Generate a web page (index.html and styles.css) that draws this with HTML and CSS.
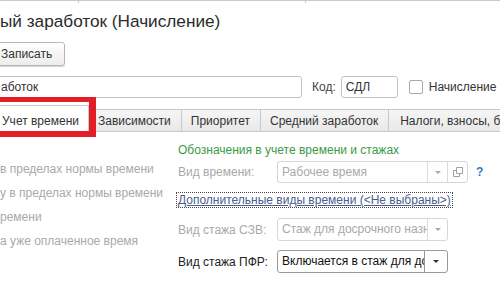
FILE: index.html
```html
<!DOCTYPE html>
<html lang="ru">
<head>
  <meta charset="UTF-8">
  <title>Средний заработок (Начисление)</title>
  <link rel="stylesheet" href="styles.css">
</head>
<body>
  <div class="topbar"><span class="seg seg1"></span><span class="seg seg2"></span><span class="seg"></span></div>

  <h1 class="title">ый заработок (Начисление)</h1>

  <div class="toolbar">
    <button class="btn">Записать</button>
  </div>

  <div class="fields">
    <div class="field name">аботок</div>
    <span class="lbl">Код:</span>
    <div class="field code">СДЛ</div>
    <label class="check"><span class="box"></span>Начисление</label>
  </div>

  <div class="tabs">
    <div class="tab active">Учет времени</div>
    <div class="tab">Зависимости</div>
    <div class="tab">Приоритет</div>
    <div class="tab">Средний заработок</div>
    <div class="tab last">Налоги, взносы, бухучет</div>
    <div class="mark"></div>
  </div>

  <div class="page">
    <div class="left">
      <div class="opt">в пределах нормы времени</div>
      <div class="opt">у в пределах нормы времени</div>
      <div class="opt">ремени</div>
      <div class="opt">а уже оплаченное время</div>
    </div>

    <div class="right">
      <div class="group">Обозначения в учете времени и стажах</div>

      <div class="row row-time">
        <span class="cap off">Вид времени:</span>
        <div class="combo off wide">
          <span class="combo-text">Рабочее время</span>
          <span class="combo-btn"><i class="arrow"></i></span>
          <span class="combo-btn">
            <svg width="10" height="10" viewBox="0 0 10 10"><path d="M3.5 0.5h6v6h-6z M0.5 3.5h3 M0.5 3.5v6h6v-3" fill="none" stroke="#a0a0a0"/></svg>
          </span>
        </div>
        <span class="help">?</span>
      </div>

      <div class="row row-link">
        <a class="link" href="#">Дополнительные виды времени (&lt;Не выбраны&gt;)</a>
      </div>

      <div class="row row-szv">
        <span class="cap off">Вид стажа СЗВ:</span>
        <div class="combo off">
          <span class="combo-text">Стаж для досрочного назначения</span>
          <span class="combo-btn"><i class="arrow"></i></span>
        </div>
      </div>

      <div class="row row-pfr">
        <span class="cap">Вид стажа ПФР:</span>
        <div class="combo on">
          <span class="combo-text">Включается в стаж для досрочного назначения</span>
          <span class="combo-btn"><i class="arrow"></i></span>
        </div>
      </div>
    </div>
  </div>
</body>
</html>
```

FILE: styles.css
```css
body {
  margin: 0;
  width: 500px;
  height: 294px;
  overflow: hidden;
  background: #fff;
  font-family: "Liberation Sans", Arial, sans-serif;
  font-size: 12px;
  color: #333;
}
.topbar {
  display: flex;
  height: 2px;
  border-top: 1px solid #c8c8c8;
}
.seg1 {
  width: 78px;
  border-right: 1px solid #c8c8c8;
}
.seg2 {
  width: 226px;
  border-right: 1px solid #c8c8c8;
}
.title {
  margin: 7px 0 0;
  font-size: 17.2px;
  font-weight: normal;
  line-height: 22px;
  color: #2b2b2b;
  white-space: nowrap;
}
.toolbar {
  margin-top: 10px;
  height: 24px;
}
.btn {
  display: block;
  margin-left: -10px;
  height: 24px;
  padding: 0 12px 0 10px;
  border: 1px solid #b8b8b8;
  border-radius: 3px;
  background: linear-gradient(#ffffff, #ececec);
  box-shadow: 0 1px 1px rgba(0, 0, 0, 0.18);
  font: inherit;
  color: #333;
}
.fields {
  display: flex;
  align-items: center;
  margin-top: 10px;
  height: 22px;
}
.field {
  box-sizing: border-box;
  height: 22px;
  line-height: 20px;
  padding: 0 4px;
  border: 1px solid #c2c2c2;
  border-radius: 3px;
  white-space: nowrap;
}
.name {
  margin-left: -10px;
  width: 312px;
  padding-left: 10px;
}
.lbl {
  margin-left: 10px;
  color: #444;
}
.code {
  margin-left: 5px;
  width: 57px;
}
.check {
  display: flex;
  align-items: center;
  margin-left: 11px;
  white-space: nowrap;
}
.box {
  width: 12px;
  height: 12px;
  margin-right: 6px;
  border: 1px solid #a8a8a8;
  border-radius: 2px;
  background: #fff;
}
.tabs {
  position: relative;
  display: flex;
  align-items: flex-end;
  height: 33px;
  border-bottom: 1px solid #c8c8c8;
}
.tab {
  box-sizing: border-box;
  height: 23px;
  line-height: 22px;
  padding: 0 10px 0 9px;
  margin-bottom: -1px;
  border-top: 1px solid #c8c8c8;
  border-right: 1px solid #c8c8c8;
  border-bottom: 1px solid #c8c8c8;
  background: linear-gradient(#f6f6f6, #e8e8e8);
  white-space: nowrap;
  flex-shrink: 0;
}
.tab.active {
  height: 27px;
  line-height: 30px;
  margin-left: -10px;
  padding: 0 9px 0 12px;
  border-bottom-color: #fff;
  background: #fff;
}
.tab.last {
  padding-left: 11px;
}
.mark {
  position: absolute;
  left: -10px;
  top: -1px;
  width: 94px;
  height: 29px;
  border-style: solid;
  border-color: #e41e26;
  border-width: 5px 7px 6px 5px;
}
.page {
  display: flex;
}
.left {
  width: 178px;
  flex-shrink: 0;
  padding-top: 25px;
  color: #a9a9a9;
}
.opt {
  height: 24px;
  line-height: 24px;
  white-space: nowrap;
}
.right {
  padding-top: 9px;
}
.group {
  height: 18px;
  line-height: 18px;
  color: #3a9b45;
  white-space: nowrap;
}
.row {
  display: flex;
  align-items: center;
}
.row-time {
  margin-top: 2px;
}
.row-link {
  margin-top: 9px;
}
.row-szv {
  margin-top: 10px;
}
.row-pfr {
  margin-top: 9px;
}
.cap {
  width: 99px;
  flex-shrink: 0;
  white-space: nowrap;
  color: #222;
}
.cap.off {
  color: #a9a9a9;
}
.combo {
  box-sizing: border-box;
  display: flex;
  width: 171px;
  height: 23px;
  border: 1px solid #d6d6d6;
  border-radius: 3px;
  overflow: hidden;
}
.combo.wide {
  width: 191px;
  height: 22px;
}
.combo.on {
  border-color: #9a9a9a;
}
.combo-text {
  flex: 1;
  min-width: 0;
  overflow: hidden;
  white-space: nowrap;
  padding-left: 4px;
  line-height: 21px;
  color: #a9a9a9;
}
.combo.on .combo-text {
  color: #111;
}
.combo-btn {
  display: flex;
  align-items: center;
  justify-content: center;
  width: 19px;
  flex-shrink: 0;
  border-left: 1px solid #dcdcdc;
}
.combo.on .combo-btn {
  width: 22px;
  border-left-color: #9a9a9a;
}
.arrow {
  width: 0;
  height: 0;
  border-left: 3px solid transparent;
  border-right: 3px solid transparent;
  border-top: 3px solid #a8a8a8;
}
.combo.on .arrow {
  border-top-color: #333;
}
.help {
  margin-left: 8px;
  color: #3a78c8;
  font-weight: bold;
}
.link {
  margin-left: -2px;
  padding: 0 1px;
  height: 14px;
  line-height: 14px;
  border: 1px dotted #444;
  color: #4b5c8e;
  white-space: nowrap;
}
```
